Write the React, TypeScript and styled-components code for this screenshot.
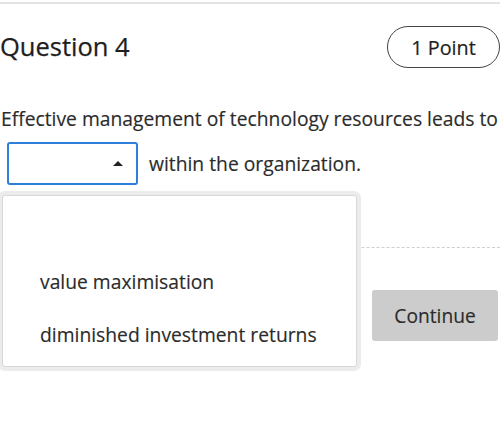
import React from "react";
import styled, { createGlobalStyle } from "styled-components";

const Global = createGlobalStyle`
  html, body { margin: 0; padding: 0; background: #fff; }
  body { font-family: "Open Sans", "Liberation Sans", sans-serif; color: #2b2b2b; }
`;

const Page = styled.div`
  position: relative;
  width: 500px;
  height: 435px;
  overflow: hidden;
  padding-top: 2px;
  box-sizing: border-box;
`;

const TopRule = styled.div`
  height: 2px;
  background: #e3e3e3;
`;

const Header = styled.div`
  display: flex;
  justify-content: space-between;
  align-items: center;
  height: 42px;
  margin-top: 22px;
`;

const Title = styled.h2`
  margin: 0;
  font-size: 25.5px;
  font-weight: 400;
  color: #1e1e1e;
  line-height: 1;
  -webkit-text-stroke: 0.25px #1e1e1e;
`;

const Pill = styled.div`
  box-sizing: border-box;
  width: 113px;
  height: 42px;
  border: 1px solid #444;
  border-radius: 21px;
  display: flex;
  align-items: center;
  justify-content: center;
  font-size: 19.8px;
  color: #1e1e1e;
  -webkit-text-stroke: 0.2px #1e1e1e;
`;

const Prompt = styled.p`
  margin: 38px 0 0 1px;
  font-size: 19.3px;
  line-height: 26px;
  color: #2b2b2b;
  white-space: nowrap;
  -webkit-text-stroke: 0.15px #2b2b2b;
`;

const BlankLine = styled.div`
  position: relative;
  display: flex;
  align-items: center;
  gap: 11px;
  margin: 10px 0 0 7px;
  font-size: 19.3px;
  color: #2b2b2b;
  -webkit-text-stroke: 0.15px #2b2b2b;
`;

const Select = styled.div`
  box-sizing: border-box;
  width: 131px;
  height: 43px;
  border: 2px solid #2d7fd9;
  border-radius: 3px;
  display: flex;
  align-items: center;
  justify-content: flex-end;
  padding-right: 13px;
`;

const Caret = styled.span`
  width: 0;
  height: 0;
  border-left: 5px solid transparent;
  border-right: 5px solid transparent;
  border-bottom: 5px solid #222;
`;

const Menu = styled.ul`
  position: absolute;
  left: -5px;
  top: 53px;
  width: 355px;
  height: 172px;
  margin: 0;
  padding: 72px 0 0 0;
  box-sizing: border-box;
  list-style: none;
  background: #fff;
  border: 1px solid #d8d8d8;
  border-radius: 3px;
  box-shadow: 0 0 0 4px #ececec;
  z-index: 2;
`;

const Option = styled.li`
  padding-left: 37px;
  height: 53px;
  line-height: 28px;
  font-size: 19.3px;
  color: #2b2b2b;
`;

const Divider = styled.div`
  margin-top: 62px;
  border-top: 1px dashed #cfcfcf;
`;

const Actions = styled.div`
  display: flex;
  justify-content: flex-end;
  margin-top: 42px;
  padding-right: 2px;
`;

const Continue = styled.button`
  width: 126px;
  height: 51px;
  border: none;
  border-radius: 3px;
  background: #cccccc;
  font-family: "Open Sans", "Liberation Sans", sans-serif;
  font-size: 19.2px;
  color: #2b2b2b;
  -webkit-text-stroke: 0.15px #2b2b2b;
`;

export default function App() {
  return (
    <>
      <Global />
      <Page>
        <TopRule />
        <Header>
          <Title>Question 4</Title>
          <Pill>1 Point</Pill>
        </Header>
        <Prompt>Effective management of technology resources leads to</Prompt>
        <BlankLine>
          <Select>
            <Caret />
          </Select>
          <span>within the organization.</span>
          <Menu>
            <Option>value maximisation</Option>
            <Option>diminished investment returns</Option>
          </Menu>
        </BlankLine>
        <Divider />
        <Actions>
          <Continue>Continue</Continue>
        </Actions>
      </Page>
    </>
  );
}
